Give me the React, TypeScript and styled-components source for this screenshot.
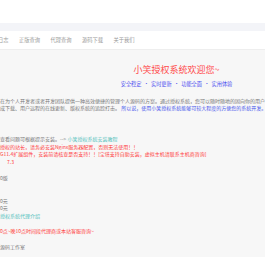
import React from "react";
import styled, { createGlobalStyle } from "styled-components";

const Global = createGlobalStyle`
  html, body { margin: 0; padding: 0; background: #ffffff; }
  body {
    font-family: "Noto Sans CJK SC", "Noto Sans", sans-serif;
    overflow: hidden;
    width: 265px;
    height: 265px;
  }
`;

const Page = styled.div`
  width: 265px;
  display: flex;
  flex-direction: column;
`;

const TopSpace = styled.div`
  height: 23px;
  background: #ffffff;
`;

const Band = styled.div`
  height: 8px;
  background: #f3f4f8;
`;

const Nav = styled.nav`
  height: 18px;
  display: flex;
  align-items: center;
  gap: 10.5px;
  margin-left: -12.5px;
  background: #ffffff;
  border-bottom: 1px solid #eeeeee;
`;

const NavItem = styled.span`
  font-size: 5.25px;
  line-height: 8px;
  color: #9a9a9a;
  white-space: nowrap;
  width: 21px;
`;

const Panel = styled.main`
  background: #f7f7f7;
  padding: 14px 0 7px;
  display: flex;
  flex-direction: column;
`;

const Hero = styled.header`
  padding-left: 88px;
  text-align: center;
  display: flex;
  flex-direction: column;
  align-items: center;
`;

const Title = styled.h1`
  margin: 0;
  font-size: 9px;
  line-height: 12px;
  font-weight: 400;
  color: #ff4b4b;
  white-space: nowrap;
`;

const Subtitle = styled.div`
  margin-top: 4px;
  font-size: 5.2px;
  line-height: 8px;
  color: #4a4cf0;
  white-space: nowrap;
  word-spacing: 1px;
`;

const Body = styled.section`
  margin-top: 8.65px;
  display: flex;
  flex-direction: column;
`;

const Line = styled.div<{ $indent?: number }>`
  height: 7.7px;
  line-height: 7.7px;
  font-size: 5px;
  white-space: nowrap;
  overflow: hidden;
  color: #777777;
  padding-left: ${(p) => p.$indent ?? 0}px;
`;

const Txt = styled.span<{ $tone: "gray" | "blue" | "teal" | "red" }>`
  color: ${(p) =>
    p.$tone === "blue"
      ? "#4656ec"
      : p.$tone === "teal"
      ? "#55c2bd"
      : p.$tone === "red"
      ? "#ff3a3a"
      : "#777777"};
`;

export default function App() {
  const nav = ["更新日志", "正版查询", "代理查询", "源码下载", "关于我们"];
  return (
    <>
      <Global />
      <Page>
        <TopSpace />
        <Band />
        <Nav>
          {nav.map((n) => (
            <NavItem key={n}>{n}</NavItem>
          ))}
        </Nav>
        <Panel>
          <Hero>
            <Title>小笑授权系统欢迎您~</Title>
            <Subtitle>安全稳定 • 实时更新 • 功能全面 • 实用体验</Subtitle>
          </Hero>
          <Body>
            <Line>
              <Txt $tone="gray">
                在为个人开发者或者开发团队提供一种高效便捷的管理个人源码的方案。通过授权系统，您可以随时随地的固向你的用户
              </Txt>
            </Line>
            <Line>
              <Txt $tone="gray">成下载、用户远程的在线更新、版权系统的追踪打击。 </Txt>
              <Txt $tone="blue">所以说，使用小笑授权系统能够可较大程度的方便您的系统开发。</Txt>
            </Line>
            <Line />
            <Line />
            <Line />
            <Line>
              <Txt $tone="gray">查看问题可根据提示安装。--&gt; </Txt>
              <Txt $tone="teal">小笑授权系统安装教程</Txt>
            </Line>
            <Line>
              <Txt $tone="red">授权的站长，请务必安装Nginx服务器配置，否则无法使用！！</Txt>
            </Line>
            <Line>
              <Txt $tone="red">G11.4扩展组件，安装前请核查是否支持！！[宝塔支持自助安装，虚拟主机请联系主机商咨询]</Txt>
            </Line>
            <Line $indent={7}>
              <Txt $tone="red">7.3</Txt>
            </Line>
            <Line />
            <Line>
              <Txt $tone="gray">0版</Txt>
            </Line>
            <Line />
            <Line />
            <Line>
              <Txt $tone="gray">0元</Txt>
            </Line>
            <Line>
              <Txt $tone="gray">0元</Txt>
            </Line>
            <Line>
              <Txt $tone="teal">授权系统代理介绍</Txt>
            </Line>
            <Line />
            <Line>
              <Txt $tone="red">0点~晚10点时间段代理商或本站客服咨询~</Txt>
            </Line>
            <Line />
            <Line>
              <Txt $tone="gray">源码工作室</Txt>
            </Line>
          </Body>
        </Panel>
      </Page>
    </>
  );
}
